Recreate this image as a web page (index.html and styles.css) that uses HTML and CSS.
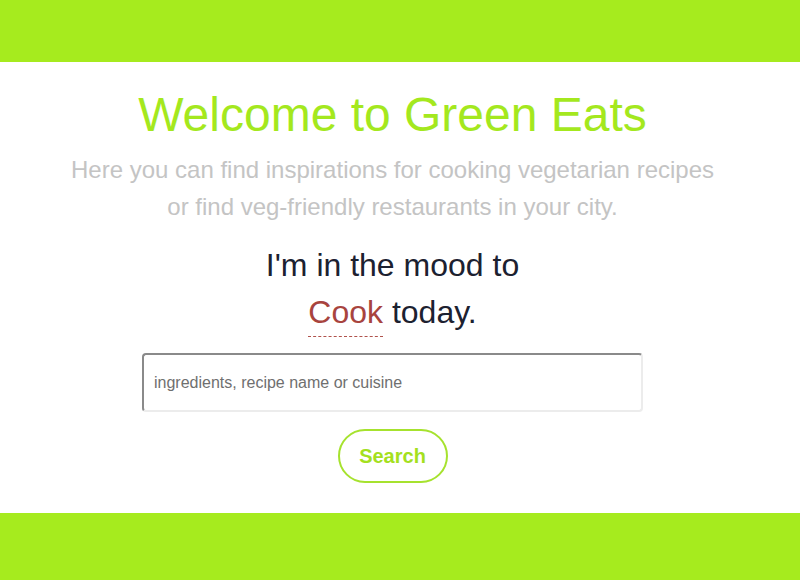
FILE: index.html
```html
<!DOCTYPE html>
<html>
<head>
<meta charset="utf-8">
<link rel="stylesheet" href="styles.css">
</head>
<body>
<header class="topbar"></header>
<main class="hero">
  <h1 class="title">Welcome to Green Eats</h1>
  <p class="subtitle">Here you can find inspirations for cooking vegetarian recipes<br>or find veg-friendly restaurants in your city.</p>
  <p class="mood">I'm in the mood to<br><span class="choice">Cook</span> today.</p>
  <input class="search-input" type="text" placeholder="ingredients, recipe name or cuisine">
  <button class="search-btn">Search</button>
</main>
<footer class="bottombar"></footer>
</body>
</html>
```
FILE: styles.css
```css
html, body {
  margin: 0;
  padding: 0;
}
body {
  height: 580px;
  display: flex;
  flex-direction: column;
  font-family: "Liberation Sans", Arial, sans-serif;
  background: #fff;
  overflow: hidden;
}
.topbar {
  height: 62px;
  background: #a6eb1e;
  flex: none;
}
.hero {
  flex: 1;
  display: flex;
  flex-direction: column;
  align-items: center;
  text-align: center;
  padding-right: 15px;
}
.title {
  margin: 25px 0 0;
  font-size: 48px;
  font-weight: normal;
  line-height: 56px;
  color: #a4e81e;
}
.subtitle {
  margin: 8px 0 0;
  font-size: 24px;
  line-height: 37px;
  color: #c4c4c4;
}
.mood {
  margin: 17px 0 0;
  font-size: 32px;
  line-height: 47px;
  color: #1c2130;
}
.choice {
  color: #a8443e;
  border-bottom: 1px dashed #b0524c;
  padding-bottom: 6px;
}
.search-input {
  margin-top: 17px;
  box-sizing: border-box;
  width: 501px;
  height: 59px;
  border-style: solid;
  border-width: 2px;
  border-color: #8a8a8a #ececec #ececec #8a8a8a;
  border-radius: 4px;
  padding: 0 10px;
  font-family: "Liberation Sans", Arial, sans-serif;
  font-size: 16px;
  outline: none;
  background: #fff;
}
.search-input::placeholder {
  color: #6f6f6f;
}
.search-btn {
  margin-top: 17px;
  box-sizing: border-box;
  width: 110px;
  height: 54px;
  border: 2px solid #a6e22e;
  border-radius: 27px;
  background: #fff;
  color: #a4e01e;
  font-family: "Liberation Sans", Arial, sans-serif;
  font-weight: bold;
  font-size: 20px;
  padding: 0;
}
.bottombar {
  height: 67px;
  background: #a6eb1e;
  flex: none;
}
```
